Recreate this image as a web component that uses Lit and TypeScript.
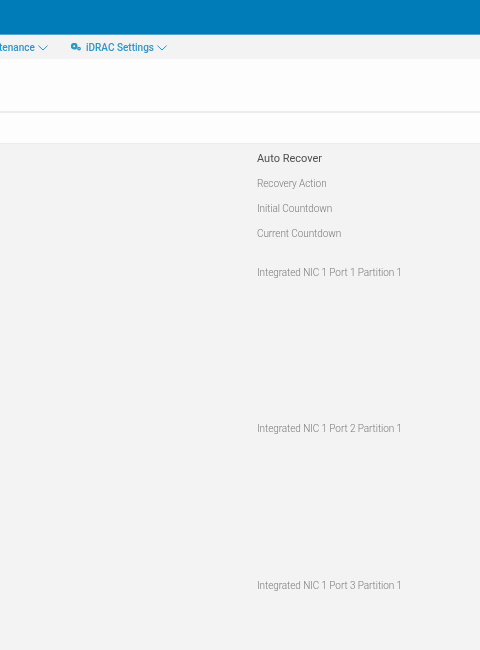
import { LitElement, html, css } from "lit";
import { customElement } from "lit/decorators.js";

@customElement("app-root")
export class AppRoot extends LitElement {
  static styles = css`
    :host {
      display: block;
      width: 480px;
      height: 650px;
      overflow: hidden;
      background: #f3f3f3;
      font-family: Roboto, "Liberation Sans", sans-serif;
    }
    .top {
      height: 34px;
      background: #007db8;
      border-bottom: 1px solid #4fa6d0;
    }
    .nav {
      height: 24px;
      background: #f3f3f3;
      display: flex;
      align-items: center;
      color: #2a97cd;
      font-size: 10px;
      font-weight: 500;
      white-space: nowrap;
      filter: blur(0.3px);
    }
    .item {
      display: flex;
      align-items: center;
    }
    .maint {
      margin-left: -1px;
      width: 72px;
    }
    .gear {
      margin-right: 5px;
    }
    .chev {
      margin-left: 3px;
      margin-top: 2px;
    }
    .label {
      position: relative;
      top: 0.5px;
    }
    .band1 {
      height: 52px;
      background: #fdfdfd;
      border-bottom: 2px solid #ececec;
    }
    .band2 {
      height: 30px;
      background: #fdfdfd;
      border-bottom: 1px solid #ececec;
    }
    .content {
      padding: 8px 0 0 257px;
      color: #7a7a7a;
      font-size: 10px;
      font-weight: 300;
      letter-spacing: -0.08px;
      line-height: 14px;
      filter: blur(0.3px);
    }
    .title {
      color: #505050;
      font-size: 11px;
      font-weight: 400;
      letter-spacing: 0;
    }
    .line {
      margin-top: 11px;
    }
    .line.first {
      margin-top: 10.6px;
    }
    .nic {
      white-space: nowrap;
    }
    .nic.first {
      margin-top: 25px;
    }
    .nic.next {
      margin-top: 142.6px;
    }
  `;

  private chevron() {
    return html`<svg class="chev" width="10" height="6" viewBox="0 0 10 6" fill="none" stroke="#2a97cd" stroke-width="1">
      <path d="M0.4 0.6 L5 5 L9.6 0.6" />
    </svg>`;
  }

  render() {
    return html`
      <div class="top"></div>
      <div class="nav">
        <div class="item maint"><span class="label">tenance</span>${this.chevron()}</div>
        <div class="item">
          <svg class="gear" width="10" height="8" viewBox="0 0 10 8">
            <circle cx="3.2" cy="3.2" r="2.2" fill="none" stroke="#2a97cd" stroke-width="2.4" />
            <circle cx="8" cy="5.6" r="1.2" fill="none" stroke="#2a97cd" stroke-width="1.4" />
          </svg>
          <span class="label">iDRAC Settings</span>${this.chevron()}
        </div>
      </div>
      <div class="band1"></div>
      <div class="band2"></div>
      <div class="content">
        <div class="title">Auto Recover</div>
        <div class="line first">Recovery Action</div>
        <div class="line">Initial Countdown</div>
        <div class="line">Current Countdown</div>
        <div class="nic first">Integrated NIC 1 Port 1 Partition 1</div>
        <div class="nic next">Integrated NIC 1 Port 2 Partition 1</div>
        <div class="nic next">Integrated NIC 1 Port 3 Partition 1</div>
      </div>
    `;
  }
}
